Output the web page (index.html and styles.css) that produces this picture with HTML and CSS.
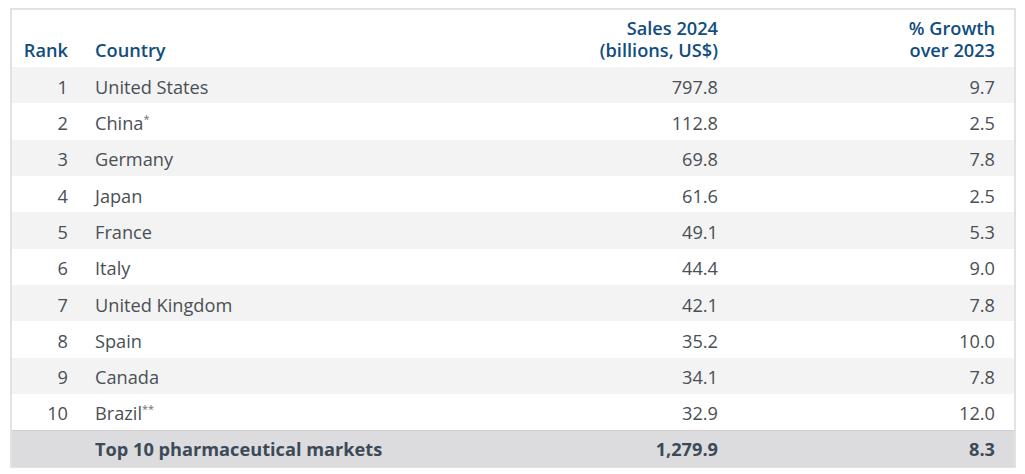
FILE: index.html
```html
<!DOCTYPE html>
<html>
<head>
<meta charset="utf-8">
<link rel="stylesheet" href="styles.css">
</head>
<body>
<div class="frame">
<table class="markets">
  <colgroup>
    <col class="c-rank"><col class="c-country"><col class="c-sales"><col class="c-growth">
  </colgroup>
  <thead>
    <tr>
      <th class="rank">Rank</th>
      <th class="country">Country</th>
      <th class="num sales">Sales 2024<br>(billions, US$)</th>
      <th class="num growth">% Growth<br>over 2023</th>
    </tr>
  </thead>
  <tbody>
    <tr><td class="rank">1</td><td class="country">United States</td><td class="num sales">797.8</td><td class="num growth">9.7</td></tr>
    <tr><td class="rank">2</td><td class="country">China<sup>*</sup></td><td class="num sales">112.8</td><td class="num growth">2.5</td></tr>
    <tr><td class="rank">3</td><td class="country">Germany</td><td class="num sales">69.8</td><td class="num growth">7.8</td></tr>
    <tr><td class="rank">4</td><td class="country">Japan</td><td class="num sales">61.6</td><td class="num growth">2.5</td></tr>
    <tr><td class="rank">5</td><td class="country">France</td><td class="num sales">49.1</td><td class="num growth">5.3</td></tr>
    <tr><td class="rank">6</td><td class="country">Italy</td><td class="num sales">44.4</td><td class="num growth">9.0</td></tr>
    <tr><td class="rank">7</td><td class="country">United Kingdom</td><td class="num sales">42.1</td><td class="num growth">7.8</td></tr>
    <tr><td class="rank">8</td><td class="country">Spain</td><td class="num sales">35.2</td><td class="num growth">10.0</td></tr>
    <tr><td class="rank">9</td><td class="country">Canada</td><td class="num sales">34.1</td><td class="num growth">7.8</td></tr>
    <tr><td class="rank">10</td><td class="country">Brazil<sup>**</sup></td><td class="num sales">32.9</td><td class="num growth">12.0</td></tr>
  </tbody>
  <tfoot>
    <tr><td class="rank"></td><td class="country">Top 10 pharmaceutical markets</td><td class="num sales">1,279.9</td><td class="num growth">8.3</td></tr>
  </tfoot>
</table>
</div>
</body>
</html>
```
FILE: styles.css
```css
html, body {
  margin: 0;
  padding: 0;
  background: #ffffff;
}
body {
  padding: 8px 0 0 10px;
  font-family: "Open Sans", "Noto Sans", sans-serif;
}
.frame {
  width: 1002px;
  border: 2px solid #e2e2e2;
  border-bottom-width: 1px;
  box-sizing: content-box;
}
.markets {
  width: 1002px;
  border-collapse: collapse;
  table-layout: fixed;
  font-size: 18.2px;
}
.c-rank { width: 70px; }
.c-country { width: 400px; }
.c-sales { width: 250px; }
.c-growth { width: 282px; }

.markets th {
  color: #114d7e;
  font-weight: 600;
  line-height: 22px;
  height: 51px;
  vertical-align: bottom;
  padding: 0 0 6px 0;
  text-align: left;
  box-sizing: content-box;
}
.markets td {
  color: #4a4f55;
  height: 36.33px;
  padding: 3px 0 0 0;
  line-height: 22px;
  vertical-align: middle;
  box-sizing: border-box;
}
.markets .rank { text-align: right; padding-right: 14px; }
.markets .country { padding-left: 13px; }
.markets .num { text-align: right; }
.markets .sales { padding-right: 14px; }
.markets .growth { padding-right: 19px; }

.markets tbody tr:nth-child(odd) td { background: #f3f3f3; }
.markets tbody tr:nth-child(even) td { background: #ffffff; }

.markets tfoot td {
  background: #dcdcde;
  color: #3c4a57;
  font-weight: 700;
  border-top: 1px solid #cfcfd2;
  padding-top: 0;
  height: 36.33px;
}
sup {
  font-size: 11px;
  line-height: 0;
  vertical-align: 7px;
  color: #6a6f75;
}
```
